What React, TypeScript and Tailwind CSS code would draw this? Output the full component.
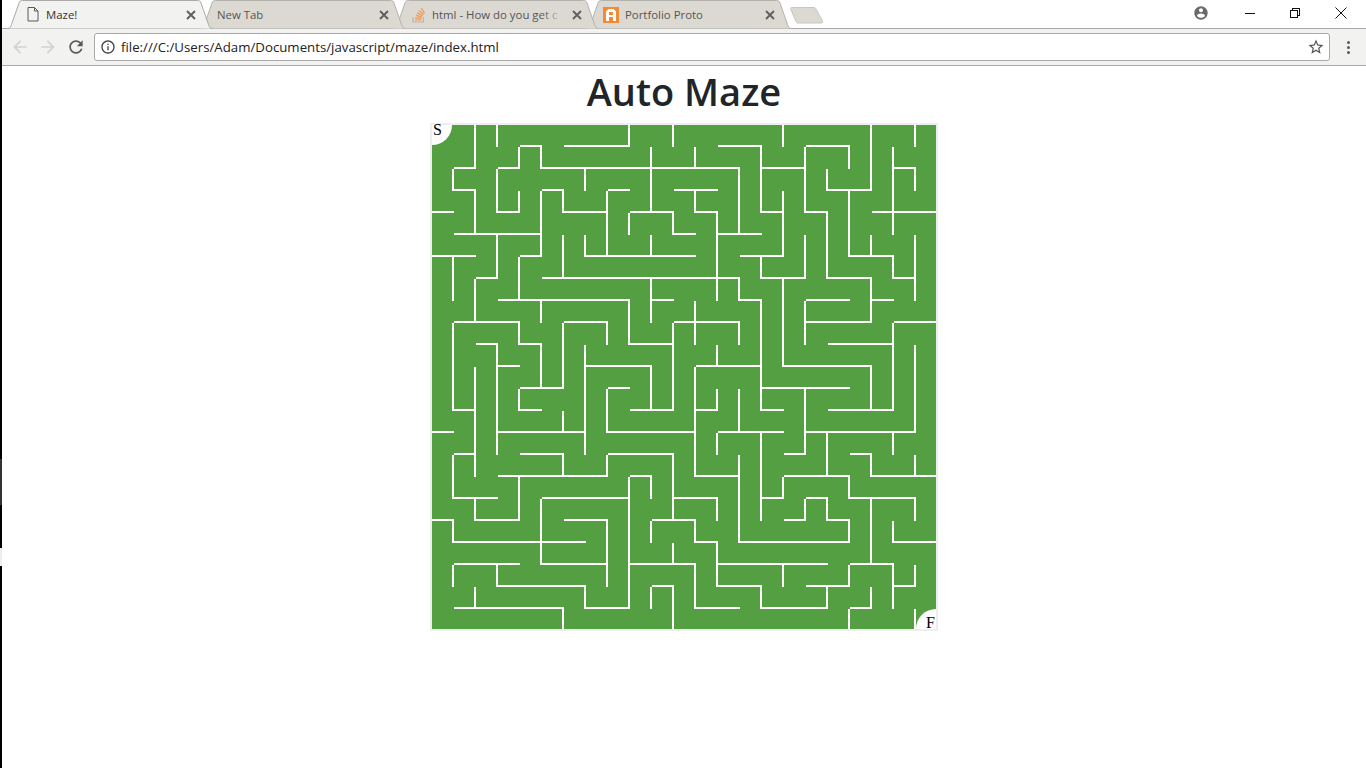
import React from "react";

const UI = { fontFamily: '"Open Sans", "Noto Sans", sans-serif' };

// Wall lines: H[j] = ranges of columns along horizontal line j; V[i] = ranges of rows along vertical line i
const H: Record<number, [number, number][]> = {
  1: [[4, 5], [6, 9], [13, 15], [17, 19]],
  2: [[1, 2], [3, 4], [5, 14], [15, 17], [21, 22]],
  3: [[1, 2], [5, 6], [8, 9], [11, 13], [18, 20]],
  4: [[0, 1], [3, 4], [6, 8], [9, 11], [12, 13], [15, 16], [17, 18], [20, 23]],
  5: [[1, 5], [11, 12], [13, 15]],
  6: [[0, 2], [4, 5], [7, 12], [14, 16], [19, 21]],
  7: [[2, 3], [5, 14], [15, 17], [18, 20], [21, 22]],
  8: [[3, 9], [10, 11], [14, 15], [17, 19], [20, 21]],
  9: [[1, 4], [6, 8], [11, 14], [17, 20], [21, 23]],
  10: [[2, 3], [4, 5], [9, 11], [18, 21]],
  11: [[3, 4], [7, 10], [12, 15], [16, 20]],
  12: [[4, 6], [8, 9], [15, 19]],
  13: [[1, 2], [4, 5], [9, 11], [12, 13], [15, 16], [18, 21]],
  14: [[0, 1], [3, 7], [8, 12], [13, 16], [17, 22]],
  15: [[1, 2], [4, 6], [8, 11], [16, 17], [19, 20]],
  16: [[3, 8], [9, 10], [12, 14], [16, 19], [20, 23]],
  17: [[1, 3], [5, 9], [11, 13], [15, 16], [17, 18], [19, 22]],
  18: [[0, 1], [2, 4], [6, 8], [10, 12], [16, 17], [18, 19]],
  19: [[1, 7], [12, 13], [14, 19], [21, 23]],
  20: [[1, 4], [5, 8], [9, 12], [13, 18], [19, 21]],
  21: [[3, 7], [10, 11], [13, 15], [17, 19], [21, 22]],
  22: [[1, 6], [7, 9], [12, 14], [15, 18], [19, 20]],
};
const V: Record<number, [number, number][]> = {
  1: [[2, 3], [6, 8], [9, 13], [15, 17], [18, 19], [20, 21]],
  2: [[0, 2], [3, 5], [7, 9], [11, 16], [17, 18], [21, 22]],
  3: [[0, 1], [2, 4], [5, 7], [10, 15], [20, 21]],
  4: [[1, 2], [3, 4], [6, 8], [9, 10], [12, 13], [16, 18]],
  5: [[1, 2], [3, 6], [8, 9], [10, 12], [17, 20]],
  6: [[3, 4], [5, 7], [9, 12], [13, 14], [15, 16], [22, 23]],
  7: [[2, 3], [5, 6], [10, 15], [21, 22]],
  8: [[3, 6], [9, 10], [12, 14], [15, 16], [18, 21]],
  9: [[0, 1], [4, 5], [8, 10], [16, 22]],
  10: [[1, 4], [5, 6], [7, 9], [11, 13], [16, 17], [18, 19], [21, 22]],
  11: [[0, 1], [4, 5], [9, 13], [15, 18], [19, 20], [21, 23]],
  12: [[1, 2], [3, 4], [8, 10], [11, 16], [18, 19], [20, 22]],
  13: [[4, 8], [10, 11], [12, 13], [14, 15], [17, 18], [19, 21]],
  14: [[2, 5], [7, 8], [9, 10], [12, 14], [15, 19]],
  15: [[1, 4], [6, 7], [8, 13], [14, 18], [21, 22]],
  16: [[0, 1], [3, 6], [7, 11], [16, 17], [20, 21]],
  17: [[1, 4], [5, 7], [8, 10], [12, 15], [17, 18]],
  18: [[2, 3], [4, 7], [14, 16], [17, 18], [21, 22]],
  19: [[1, 2], [3, 6], [16, 17], [18, 19], [20, 21], [22, 23]],
  20: [[0, 3], [5, 6], [7, 9], [11, 13], [15, 16], [17, 20], [21, 22]],
  21: [[1, 5], [6, 7], [9, 13], [14, 15], [18, 19], [20, 22]],
  22: [[0, 1], [2, 3], [5, 8], [10, 14], [15, 16], [17, 18], [20, 21], [22, 23]],
};
const has = (list: [number, number][] | undefined, n: number) =>
  !!list && list.some(([a, b]) => n >= a && n < b);

function Cell({ r, c }: { r: number; c: number }) {
  const right = has(V[c + 1], r);
  const bottom = has(H[r + 1], c);
  const wall =
    right && bottom
      ? "shadow-[inset_-2px_0_0_#fff,inset_0_-2px_0_#fff]"
      : right
        ? "shadow-[inset_-2px_0_0_#fff]"
        : bottom
          ? "shadow-[inset_0_-2px_0_#fff]"
          : "";
  return (
    <div className={`min-w-0 min-h-0 ${wall}`}>
      {r === 0 && c === 0 && (
        <div className="w-5 h-5 bg-white rounded-br-full text-[16px] leading-[10px] pl-[1px] text-black" style={{ fontFamily: '"Liberation Serif", serif' }}>
          S
        </div>
      )}
      {r === 22 && c === 22 && (
        <div className="w-5 h-5 bg-white rounded-tl-full text-[16px] leading-[18px] pt-[5px] text-right pr-[1px] text-black" style={{ fontFamily: '"Liberation Serif", serif' }}>
          F
        </div>
      )}
    </div>
  );
}

function TabShape({ active }: { active?: boolean }) {
  return (
    <svg className="absolute left-0 top-0" width="206" height="29" viewBox="0 0 206 29">
      <path
        d="M0.5 28.5 C3 28.5 3.6 27 4.5 24.5 L12 3 C12.7 1 13.5 .5 15.5 .5 H190.5 C192.5 .5 193.3 1 194 3 L201.5 24.5 C202.4 27 203 28.5 205.5 28.5"
        fill={active ? "#f2f2f0" : "#dcd9d3"}
        stroke={active ? "#a9a9a9" : "#b4b2ad"}
        strokeWidth="1"
      />
    </svg>
  );
}

function CloseX({ color = "#5f5f5f" }: { color?: string }) {
  return (
    <svg width="10" height="10" viewBox="0 0 10 10" className="shrink-0">
      <path d="M1 1 L9 9 M9 1 L1 9" stroke={color} strokeWidth="1.9" />
    </svg>
  );
}

function Tab({
  icon,
  title,
  active,
  z,
  fade,
  textLeft,
}: {
  icon?: React.ReactNode;
  title: string;
  active?: boolean;
  z: string;
  fade?: boolean;
  textLeft: string;
}) {
  return (
    <div className={`relative w-[206px] h-[29px] shrink-0 -mr-[13px] ${z}`}>
      <TabShape active={active} />
      <div className="relative h-[29px] flex items-center">
        {icon}
        <div className={`relative whitespace-nowrap text-[11.4px] leading-[16px] ${textLeft} ${active ? "text-[#333333]" : "text-[#555555]"}`}>
          {title}
          {fade && <div className="absolute -right-[8px] top-0 w-[24px] h-full bg-gradient-to-r from-transparent to-[#dcd9d3]" />}
        </div>
        <div className="absolute left-[179px] top-[10px]">
          <CloseX />
        </div>
      </div>
    </div>
  );
}

export default function App() {
  const rows = Array.from({ length: 23 }, (_, r) => r);
  const cols = Array.from({ length: 23 }, (_, c) => c);
  return (
    <div className="flex w-full h-[768px] overflow-hidden bg-white" style={UI}>
      <div className="w-[2px] h-[768px] shrink-0 flex flex-col bg-black">
        <div className="h-[459px] bg-black" />
        <div className="h-[46px] bg-[#333333]" />
        <div className="h-[43px] bg-black" />
        <div className="h-[18px] bg-[#eeeeee]" />
        <div className="flex-1 bg-black" />
      </div>
      <div className="flex-1 flex flex-col min-w-0">
        {/* tab strip */}
        <div className="relative h-[29px] shrink-0 flex border-b border-[#a9a9a9] bg-white pl-[5px]">
          <Tab
            active
            z="z-40"
            title="Maze!"
            textLeft="ml-[7px]"
            icon={
              <svg width="12" height="15" viewBox="0 0 12 15" className="ml-[20px] shrink-0">
                <path d="M1 .5 H7.5 L11 4 V14 H1 Z M7.5 .5 V4 H11" fill="none" stroke="#5a5a5a" strokeWidth="1" />
              </svg>
            }
          />
          <Tab z="z-30" title="New Tab" textLeft="ml-[17px]" />
          <Tab
            z="z-20"
            title="html - How do you get c"
            fade
            textLeft="ml-[6px]"
            icon={
              <svg width="14" height="16" viewBox="0 0 14 16" className="ml-[19px] shrink-0">
                <path d="M1 10 V15 H11.5 V10" fill="none" stroke="#b8b5ae" strokeWidth="1.1" />
                <path d="M3 13 H9.5 M3.2 10.8 L9.6 11.3 M3.9 8.4 L10 10 M5.2 5.9 L10.7 8.8 M7 3.4 L11.6 7.5 M9.3 1 L12.6 6.2" fill="none" stroke="#f2954d" strokeWidth="1.2" />
              </svg>
            }
          />
          <Tab
            z="z-10"
            title="Portfolio Proto"
            textLeft="ml-[6px]"
            icon={
              <svg width="16" height="16" viewBox="0 0 16 16" className="ml-[17px] mt-[1px] shrink-0" shapeRendering="crispEdges">
                <rect width="16" height="16" fill="#f68a33" />
                <path d="M5 2 H11 V3 H12 V4 H13 V14 H10 V10 H6 V14 H3 V4 H4 V3 H5 Z" fill="#ffffff" />
                <rect x="6" y="5" width="4" height="3" fill="#f68a33" />
              </svg>
            }
          />
          {/* new tab button */}
          <svg width="36" height="18" viewBox="0 0 36 18" className="ml-[10px] mt-[7px] shrink-0 relative">
            <path d="M1.5 1.5 C1.5 .8 2 .5 3 .5 H25 C26 .5 26.5 1 27 2 L33.5 14 C34 15.5 33.5 16 32 16 H9 C8 16 7.5 15.5 7 14.5 Z" fill="#dcd9d3" stroke="#c9c6c0" strokeWidth="1" />
          </svg>
          {/* window controls */}
          <div className="ml-auto flex items-start h-[28px] relative">
            <svg width="16" height="16" viewBox="0 0 24 24" className="mt-[5px] mr-[35px]" fill="#6a6a6a">
              <path d="M12 2C6.48 2 2 6.48 2 12s4.48 10 10 10 10-4.48 10-10S17.52 2 12 2zm0 3c1.66 0 3 1.34 3 3s-1.34 3-3 3-3-1.34-3-3 1.34-3 3-3zm0 14.2c-2.5 0-4.71-1.28-6-3.22.03-1.99 4-3.08 6-3.08 1.99 0 5.97 1.09 6 3.08-1.29 1.94-3.5 3.22-6 3.22z" />
            </svg>
            <svg width="12" height="12" viewBox="0 0 12 12" className="mt-[7px] mr-[33px]" shapeRendering="crispEdges">
              <path d="M1 6.5 H11" stroke="#111" strokeWidth="1" />
            </svg>
            <svg width="12" height="12" viewBox="0 0 12 12" className="mt-[7px] mr-[34px]" shapeRendering="crispEdges">
              <path d="M1.5 3.5 H8.5 V10.5 H1.5 Z M3.5 3 V1.5 H10.5 V8.5 H9" fill="none" stroke="#111" strokeWidth="1" />
            </svg>
            <svg width="12" height="12" viewBox="0 0 12 12" className="mt-[7px] mr-[19px]">
              <path d="M.5 .5 L11.5 11.5 M11.5 .5 L.5 11.5" stroke="#111" strokeWidth="1" />
            </svg>
          </div>
        </div>
        {/* toolbar */}
        <div className="h-[37px] shrink-0 flex items-center bg-[#f2f2f0] border-b border-[#a9a9a9]">
          <svg width="20" height="20" viewBox="0 0 24 24" className="ml-[8px]" fill="#d3d2cf">
            <path d="M20 11H7.83l5.59-5.59L12 4l-8 8 8 8 1.41-1.41L7.83 13H20v-2z" />
          </svg>
          <svg width="20" height="20" viewBox="0 0 24 24" className="ml-[8px] scale-x-[-1]" fill="#d3d2cf">
            <path d="M20 11H7.83l5.59-5.59L12 4l-8 8 8 8 1.41-1.41L7.83 13H20v-2z" />
          </svg>
          <svg width="20" height="20" viewBox="0 0 24 24" className="ml-[8px]" fill="#5a5a5a">
            <path d="M17.65 6.35C16.2 4.9 14.21 4 12 4c-4.42 0-7.99 3.58-7.99 8s3.57 8 7.99 8c3.73 0 6.84-2.55 7.73-6h-2.08c-.82 2.33-3.04 4-5.65 4-3.31 0-6-2.69-6-6s2.69-6 6-6c1.66 0 3.14.69 4.22 1.78L13 11h7V4l-2.35 2.35z" />
          </svg>
          <div className="ml-[8px] w-[1236px] h-[28px] shrink-0 flex items-center bg-white border border-[#a9a9a9] rounded-[3px]">
            <svg width="16" height="16" viewBox="0 0 24 24" className="ml-[5px] shrink-0" fill="#444">
              <path d="M11 7h2v2h-2zm0 4h2v6h-2zm1-9C6.48 2 2 6.48 2 12s4.48 10 10 10 10-4.48 10-10S17.52 2 12 2zm0 18c-4.41 0-8-3.59-8-8s3.59-8 8-8 8 3.59 8 8-3.59 8-8 8z" />
            </svg>
            <span className="ml-[5px] text-[13.25px] leading-[20px] text-[#222222] whitespace-nowrap">
              file:///C:/Users/Adam/Documents/javascript/maze/index.html
            </span>
            <svg width="18" height="18" viewBox="0 0 24 24" className="ml-auto mr-[4px] shrink-0" fill="#555">
              <path d="M22 9.24l-7.19-.62L12 2 9.19 8.63 2 9.24l5.46 4.73L5.82 21 12 17.27 18.18 21l-1.63-7.03L22 9.24zM12 15.4l-3.76 2.27 1-4.28-3.32-2.88 4.38-.38L12 6.1l1.71 4.04 4.38.38-3.32 2.88 1 4.28L12 15.4z" />
            </svg>
          </div>
          <div className="ml-[17px] flex flex-col gap-[2px]">
            <div className="w-[3px] h-[3px] bg-[#5a5a5a] rounded-full" />
            <div className="w-[3px] h-[3px] bg-[#5a5a5a] rounded-full" />
            <div className="w-[3px] h-[3px] bg-[#5a5a5a] rounded-full" />
          </div>
        </div>
        {/* page */}
        <div className="flex-1 flex flex-col items-center">
          <h1 className="h-[57px] text-[38px] leading-[50px] font-semibold text-[#212529]">Auto Maze</h1>
          <div className="w-[508px] h-[508px] border-2 border-[#eeeeee]">
            <div className="grid grid-cols-[repeat(22,22px)_20px] grid-rows-[repeat(22,22px)_20px] w-[504px] h-[504px] bg-[#559f43]">
              {rows.map((r) => cols.map((c) => <Cell key={`${r}-${c}`} r={r} c={c} />))}
            </div>
          </div>
        </div>
      </div>
    </div>
  );
}
